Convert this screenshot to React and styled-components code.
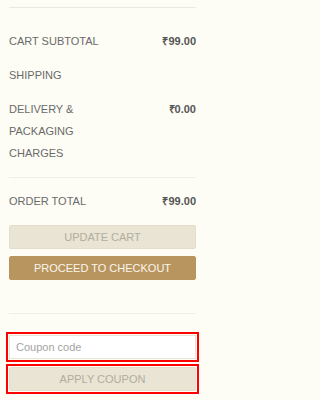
import React from "react";
import styled, { createGlobalStyle } from "styled-components";

const GlobalStyle = createGlobalStyle`
  html, body {
    margin: 0;
    padding: 0;
    background: #fdfdf5;
  }
  body {
    font-family: "Liberation Sans", Arial, sans-serif;
  }
`;

const Wrapper = styled.div`
  width: 207px;
  box-sizing: border-box;
  padding: 7px 11px 0 9px;
  background: #fdfdf5;
  min-height: 400px;
`;

const Divider = styled.hr`
  border: 0;
  height: 1px;
  background: ${({ $light }) => ($light ? "#f1efe5" : "#ebe9dd")};
  margin: ${({ $space }) => $space || "0"};
`;

const Totals = styled.div`
  display: flex;
  flex-direction: column;
  margin-top: ${({ $top }) => $top || "0"};
`;

const Row = styled.div`
  display: flex;
  align-items: flex-start;
  padding: 6px 0;
  font-size: 11px;
  line-height: 22px;
`;

const Label = styled.div`
  width: 50%;
  color: #6a6a6a;
  text-transform: uppercase;
`;

const Value = styled.div`
  width: 50%;
  text-align: right;
  color: #555;
  font-weight: bold;
`;

const Actions = styled.div`
  display: flex;
  flex-direction: column;
  gap: 7px;
  margin-top: 7px;
`;

const Button = styled.button`
  display: block;
  width: 100%;
  height: 24px;
  border: 1px solid ${({ $primary }) => ($primary ? "#b8955f" : "#e3ddca")};
  border-radius: 2px;
  background: ${({ $primary }) => ($primary ? "#b8955f" : "#e9e4d3")};
  color: ${({ $primary }) => ($primary ? "#fbf6ec" : "#b2ad9f")};
  font-family: "Liberation Sans", Arial, sans-serif;
  font-size: 11px;
  text-transform: uppercase;
  padding: 0;
  cursor: pointer;
`;

const Coupon = styled.div`
  display: flex;
  flex-direction: column;
  gap: 8px;
  margin-top: 21px;
`;

const Marked = styled.div`
  outline: 2px solid #ff0000;
  outline-offset: 1px;
`;

const CouponInput = styled.input`
  display: block;
  width: 100%;
  height: 24px;
  box-sizing: border-box;
  border: 1px solid #e7e4d9;
  background: #fff;
  padding: 0 6px;
  font-family: "Liberation Sans", Arial, sans-serif;
  font-size: 11px;
  color: #555;
  outline: none;

  &::placeholder {
    color: #a3a3a3;
  }
`;

const rows = [
  { label: "Cart Subtotal", value: "₹99.00" },
  { label: "Shipping", value: "" },
  { label: "Delivery & Packaging Charges", value: "₹0.00" },
];

const App = () => {
  return (
    <>
      <GlobalStyle />
      <Wrapper>
        <Divider />
        <Totals $top="15.5px">
          {rows.map((r) => (
            <Row key={r.label}>
              <Label>{r.label}</Label>
              <Value>{r.value}</Value>
            </Row>
          ))}
        </Totals>

        <Divider $light $space="7.5px 0 6px" />

        <Totals>
          <Row>
            <Label>Order Total</Label>
            <Value>₹99.00</Value>
          </Row>
        </Totals>

        <Actions>
          <Button>Update Cart</Button>
          <Button $primary>Proceed to Checkout</Button>
        </Actions>

        <Divider $light $space="33px 0 0" />

        <Coupon>
          <Marked>
            <CouponInput placeholder="Coupon code" />
          </Marked>
          <Marked>
            <Button>Apply Coupon</Button>
          </Marked>
        </Coupon>
      </Wrapper>
    </>
  );
};

export default App;
